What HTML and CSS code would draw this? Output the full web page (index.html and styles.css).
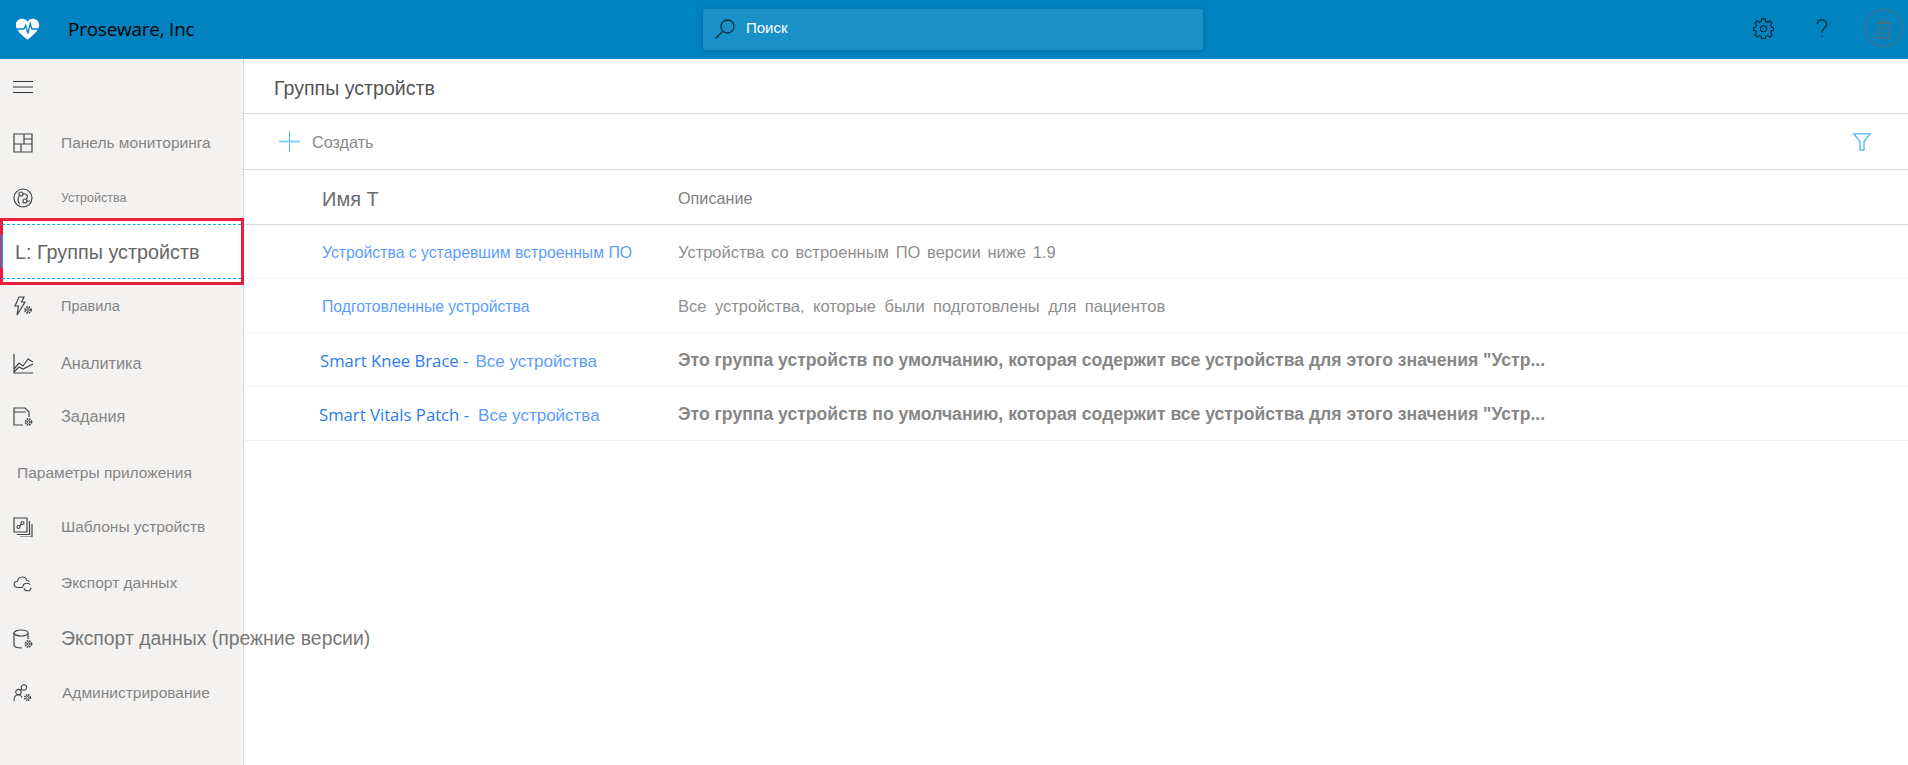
FILE: index.html
```html
<!DOCTYPE html>
<html lang="ru">
    <head>
        <meta charset="utf-8">
        <title>Группы устройств</title>
        <link rel="stylesheet" href="styles.css">
    </head>
    <body>
        <div class="top">
            <div class="brand">
                <svg class="logo" viewBox="0 0 28 24" width="25" height="22">
                    <path fill="#fff" d="M14 24 C9 20 1 14 1 7.500 C1 3 4.500 0.500 8 0.500 C10.500 0.500 12.700 1.800 14 4 C15.300 1.800 17.500 0.500 20 0.500 C23.500 0.500 27 3 27 7.500 C27 14 19 20 14 24 Z"/>
                    <path fill="none" stroke="#0083bf" stroke-width="1.500" d="M2 12 H10 L12 8 L14.500 17 L17 6 L19 12 H26"/>
                </svg>
                <span class="brand-name">Proseware, Inc</span>
            </div>
            <div class="search">
                <svg viewBox="0 0 22 22" width="22" height="22">
                    <circle cx="13.500" cy="8.500" r="6.500" fill="none" stroke="#0b2c3d" stroke-width="1.300"/>
                    <path stroke="#0b2c3d" stroke-width="1.300" d="M8.800 13.200 L1.500 20.500"/>
                </svg>
                <span>Поиск</span>
            </div>
            <div class="top-icons">
                <svg class="gear" viewBox="0 0 24 24" width="21" height="21">
                    <path fill="none" stroke="#05202e" stroke-width="1.200" d="M10 1 H14 L14.600 4 L16.800 4.900 L19.300 3.200 L21.800 5.700 L20.100 8.200 L21 10.400 L23.500 11 V14 L21 14.600 L20.100 16.800 L21.800 19.300 L19.300 21.800 L16.800 20.100 L14.600 21 L14 23.500 H10 L9.400 21 L7.200 20.100 L4.700 21.800 L2.200 19.300 L3.900 16.800 L3 14.600 L.5 14 V11 L3 10.400 L3.900 8.200 L2.200 5.700 L4.700 3.200 L7.200 4.900 L9.400 4 Z"/>
                    <circle cx="12" cy="12.300" r="3.500" fill="none" stroke="#05202e" stroke-width="1.200"/>
                </svg>
                <svg class="help" viewBox="0 0 14 22" width="12" height="21">
                    <path fill="none" stroke="#05202e" stroke-width="1.300" d="M1.500 6 C1.500 3 4 1 7 1 C10 1 12.500 3 12.500 6 C12.500 10 7 10.500 7 16"/>
                    <circle cx="7" cy="20" r="0.900" fill="#05202e"/>
                </svg>
                <div class="avatar">
                    <svg viewBox="0 0 16 24" width="14" height="21">
                        <path fill="none" stroke="#5d6d76" stroke-width="1.500" d="M1 6 H15 V23 H1 Z M4.500 1 L7 6 M11.500 1 L9 6"/>
                        <circle cx="8" cy="12" r="2.500" fill="none" stroke="#5d6d76"/>
                        <path fill="none" stroke="#5d6d76" d="M3.500 20 C4 16 12 16 12.500 20"/>
                    </svg>
                </div>
            </div>
        </div>

        <div class="page">
            <div class="side">
                <div class="menu-btn">
                    <svg viewBox="0 0 20 12" width="20" height="12">
                        <path stroke="#333" stroke-width="1" d="M0 .5 H20 M0 6 H20 M0 11.500 H20"/>
                    </svg>
                </div>
                <ul class="nav">
                    <li class="wide up">
                        <svg class="ico" viewBox="0 0 20 20"><path d="M1 1 H19 V19 H1 Z M11 1 V11 M1 11 H19 M11 6 H19 M8 11 V19"/></svg>
                        <span>Панель мониторинга</span>
                    </li>
                    <li class="small up">
                        <svg class="ico" viewBox="0 0 20 20"><circle cx="10" cy="10" r="9"/><circle cx="8" cy="6" r="2"/><circle cx="12" cy="13" r="2"/><path d="M6.500 7.500 C4 11 5 15 7 16 M10 6 H12 C15 6 15 10 13 11.500 M14 13 H17"/></svg>
                        <span>Устройства</span>
                    </li>
                    <li class="current">
                        <div class="focus">L: Группы устройств</div>
                    </li>
                    <li class="tiny down">
                        <svg class="ico" viewBox="0 0 20 20"><path d="M6 1 H11 L8.500 6 H12 L4 19 L5.500 10 H2 Z"/><circle cx="15" cy="14" r="1.300" stroke-width="1"/><circle cx="15" cy="14" r="3" stroke-width="1.800" stroke-dasharray="1.500 .9"/></svg>
                        <span>Правила</span>
                    </li>
                    <li class="wide big up">
                        <svg class="ico" viewBox="0 0 20 20"><path d="M1 0 V19 H20 M1 15 L6 9 L10 12 L15 5 L20 8 M1 18 L6 13 L10 15 L20 10"/></svg>
                        <span>Аналитика</span>
                    </li>
                    <li class="big down">
                        <svg class="ico" viewBox="0 0 20 20"><path d="M10 18 H1 V1 H12 L16 5 V10 M1 5 H13"/><circle cx="15.500" cy="15" r="1.300" stroke-width="1"/><circle cx="15.500" cy="15" r="3" stroke-width="1.800" stroke-dasharray="1.500 .9"/></svg>
                        <span>Задания</span>
                    </li>
                    <li class="group">
                        <span>Параметры приложения</span>
                    </li>
                    <li class="down">
                        <svg class="ico" viewBox="0 0 20 20"><path d="M1 1 H14 V15 H1 Z M16.500 4 V17.500 H4 M19 7 V20 H7"/><circle cx="5.500" cy="10" r="1.500"/><circle cx="9.500" cy="6" r="1.500"/><path d="M6.500 9 L8.500 7"/></svg>
                        <span>Шаблоны устройств</span>
                    </li>
                    <li class="wide">
                        <svg class="ico" viewBox="0 0 22 20"><path d="M11 15 H5 C0 15 0 8 5 8 C6 2 14 2 15 7 C16 7 17 7.500 18 8.500"/><path d="M11 14 C11 10 17 9 19 12 M20 15 C19 20 13 19 12 16"/></svg>
                        <span>Экспорт данных</span>
                    </li>
                    <li class="legacy">
                        <svg class="ico" viewBox="0 0 20 20"><ellipse cx="8" cy="4" rx="7" ry="3"/><path d="M1 4 V16 C1 18 4 19 9 19 M15 4 V10"/><circle cx="15.500" cy="15" r="1.300" stroke-width="1"/><circle cx="15.500" cy="15" r="3" stroke-width="1.800" stroke-dasharray="1.500 .9"/></svg>
                        <span>Экспорт данных (прежние версии)</span>
                    </li>
                    <li class="admin down">
                        <svg class="ico" viewBox="0 0 22 20"><circle cx="12" cy="4" r="3"/><circle cx="6" cy="9" r="3"/><path d="M1 19 C1 14 3 12 6 12 C8 12 9 13 10 15"/><circle cx="16" cy="15" r="1.300" stroke-width="1"/><circle cx="16" cy="15" r="3" stroke-width="1.800" stroke-dasharray="1.500 .9"/></svg>
                        <span>Администрирование</span>
                    </li>
                </ul>
            </div>

            <div class="main">
                <div class="title-bar">Группы устройств</div>
                <div class="tool-bar">
                    <div class="create">
                        <svg viewBox="0 0 21 21" width="21" height="21">
                            <path stroke="#4db2ff" stroke-width="1" d="M10.500 0 V21"/>
                            <path stroke="#8accff" stroke-width="2" d="M0 10.500 H21"/>
                        </svg>
                        <span>Создать</span>
                    </div>
                    <svg viewBox="0 0 18 18" width="18" height="18">
                        <path fill="none" stroke="#4db2ff" stroke-width="1.300" d="M.8 .8 H17.200 L11 8.500 V17.200 H7 V8.500 Z"/>
                    </svg>
                </div>
                <div class="row head">
                    <div class="name-col">Имя Т</div>
                    <div class="desc-col">Описание</div>
                </div>
                <div class="row">
                    <div class="name-col link">Устройства с устаревшим встроенным ПО</div>
                    <div class="desc-col plain">Устройства со встроенным ПО версии ниже 1.9</div>
                </div>
                <div class="row">
                    <div class="name-col link">Подготовленные устройства</div>
                    <div class="desc-col plain loose">Все устройства, которые были подготовлены для пациентов</div>
                </div>
                <div class="row">
                    <div class="name-col link shift1"><b>Smart Knee Brace -</b><span>Все устройства</span></div>
                    <div class="desc-col strong">Это группа устройств по умолчанию, которая содержит все устройства для этого значения "Устр...</div>
                </div>
                <div class="row">
                    <div class="name-col link shift2"><b>Smart Vitals Patch -</b><span>Все устройства</span></div>
                    <div class="desc-col strong">Это группа устройств по умолчанию, которая содержит все устройства для этого значения "Устр...</div>
                </div>
            </div>
        </div>
    </body>
</html>
```

FILE: styles.css
```css
*{
    margin: 0;
    padding: 0;
    box-sizing: border-box;
}
html,body{
    height: 100%;
    overflow: hidden;
}
body{
    display: flex;
    flex-direction: column;
    font-family: "Liberation Sans", Arial, sans-serif;
    color: #666;
    background-color: #fff;
}

/*顶部*/
.top{
    height: 59px;
    flex-shrink: 0;
    background-color: #0083bf;
    display: flex;
    align-items: center;
    padding-bottom: 1px;
}
.brand{
    width: 703px;
    display: flex;
    align-items: center;
    padding-left: 15px;
}
.brand-name{
    margin-left: 28px;
    font-family: "Open Sans", sans-serif;
    font-size: 18.900px;
    letter-spacing: -.2px;
    color: #000;
}
.search{
    width: 500px;
    height: 41px;
    background-color: #1a90c8;
    border-radius: 2px;
    box-shadow: 0 1px 4px rgba(0,0,0,.2);
    display: flex;
    align-items: center;
    padding-left: 11px;
    color: #fff;
    font-size: 15px;
}
.search span{
    margin-left: 10px;
    padding-bottom: 3px;
}
.top-icons{
    flex: 1;
    display: flex;
    align-items: center;
    padding: 0 0 2px 550px;
}
.help{
    margin-left: 42px;
}
.avatar{
    width: 38px;
    height: 38px;
    margin-left: 37px;
    border: 1px solid #5d6d76;
    border-radius: 50%;
    display: flex;
    justify-content: center;
    align-items: center;
    flex-shrink: 0;
}

/*菜单和内容*/
.page{
    flex: 1;
    display: flex;
}
.side{
    width: 244px;
    flex-shrink: 0;
    background-color: #f3f2f1;
    border-right: 1px solid #d8d8d8;
    position: relative;
    z-index: 1;
}
.menu-btn{
    height: 54px;
    padding: 1px 0 0 13px;
    display: flex;
    align-items: center;
}
.nav{
    list-style: none;
}
.nav>li{
    height: 55px;
    padding-left: 13px;
    display: flex;
    align-items: center;
    white-space: nowrap;
    font-size: 15.500px;
    color: #858585;
}
.nav>li.wide{
    height: 56px;
}
.nav>li.up{
    padding-top: 3px;
}
.nav>li.down{
    padding-bottom: 2px;
}
.nav .ico{
    width: 20px;
    height: 20px;
    margin-right: 28px;
    flex-shrink: 0;
    fill: none;
    stroke: #444;
    stroke-width: 1.200;
}
.nav>li.small{
    font-size: 12.500px;
}
.nav>li.tiny{
    font-size: 14.500px;
}
.nav>li.big{
    font-size: 16.300px;
}
.nav>li.current{
    position: relative;
    z-index: 0;
    padding: 0;
}
/*红色框*/
.nav>li.current::before{
    content: "";
    position: absolute;
    top: -6px;
    bottom: -6px;
    left: 0;
    right: -1px;
    border: 3px solid #e81f3f;
    background-color: #fff;
    z-index: -1;
}
.focus{
    flex: 1;
    height: 55px;
    margin: 0 2px;
    padding: 2px 0 0 13px;
    display: flex;
    align-items: center;
    font-size: 19.800px;
    color: #666;
    border-top: 1px dashed #12a5ee;
    border-bottom: 1px dashed #12a5ee;
    position: relative;
}
/*左边的蓝条*/
.focus::after{
    content: "";
    position: absolute;
    left: -1px;
    top: 10px;
    bottom: 10px;
    width: 2px;
    background-color: #2b88d8;
}
.nav>li.group{
    padding-left: 17px;
}
.nav>li.legacy{
    font-size: 19.400px;
    color: #777;
}
.nav>li.admin .ico{
    margin-right: 29px;
}

.main{
    flex: 1;
}
.title-bar{
    height: 55px;
    padding: 5px 0 0 30px;
    display: flex;
    align-items: center;
    font-size: 19.600px;
    color: #555;
    border-bottom: 1px solid #d8d8d8;
}
.tool-bar{
    height: 56px;
    padding: 0 37px 0 35px;
    display: flex;
    justify-content: space-between;
    align-items: center;
    border-bottom: 1px solid #d8d8d8;
}
.create{
    display: flex;
    align-items: center;
    font-size: 16.200px;
    color: #888;
}
.create span{
    margin-left: 12px;
    padding-top: 2px;
}
.row{
    height: 54px;
    display: flex;
    align-items: center;
    border-bottom: 1px solid #efefef;
}
.row.head{
    height: 55px;
    border-bottom-color: #d8d8d8;
}
.name-col{
    width: 434px;
    flex-shrink: 0;
    padding-left: 78px;
    padding-top: 2px;
    white-space: nowrap;
}
.head .name-col{
    font-size: 20px;
    color: #6b6b70;
    padding-top: 4px;
}
.head .desc-col{
    font-size: 16.200px;
    color: #808080;
}
.link{
    font-size: 15.750px;
    color: #5c9dff;
}
.link b{
    font-family: "Open Sans", sans-serif;
    font-weight: 400;
    font-size: 16.700px;
    color: #2b7cf0;
    margin-right: 7px;
}
.link span{
    font-size: 17px;
}
.shift1{
    padding-left: 76px;
}
.shift2{
    padding-left: 75px;
}
.shift2 b{
    margin-right: 9px;
}
.desc-col{
    white-space: nowrap;
    padding-top: 2px;
}
.plain{
    font-size: 16.500px;
    color: #8f8f8f;
    word-spacing: 2.200px;
}
.plain.loose{
    word-spacing: 3.900px;
}
.strong{
    font-size: 17.600px;
    font-weight: 700;
    color: #868686;
}
```
